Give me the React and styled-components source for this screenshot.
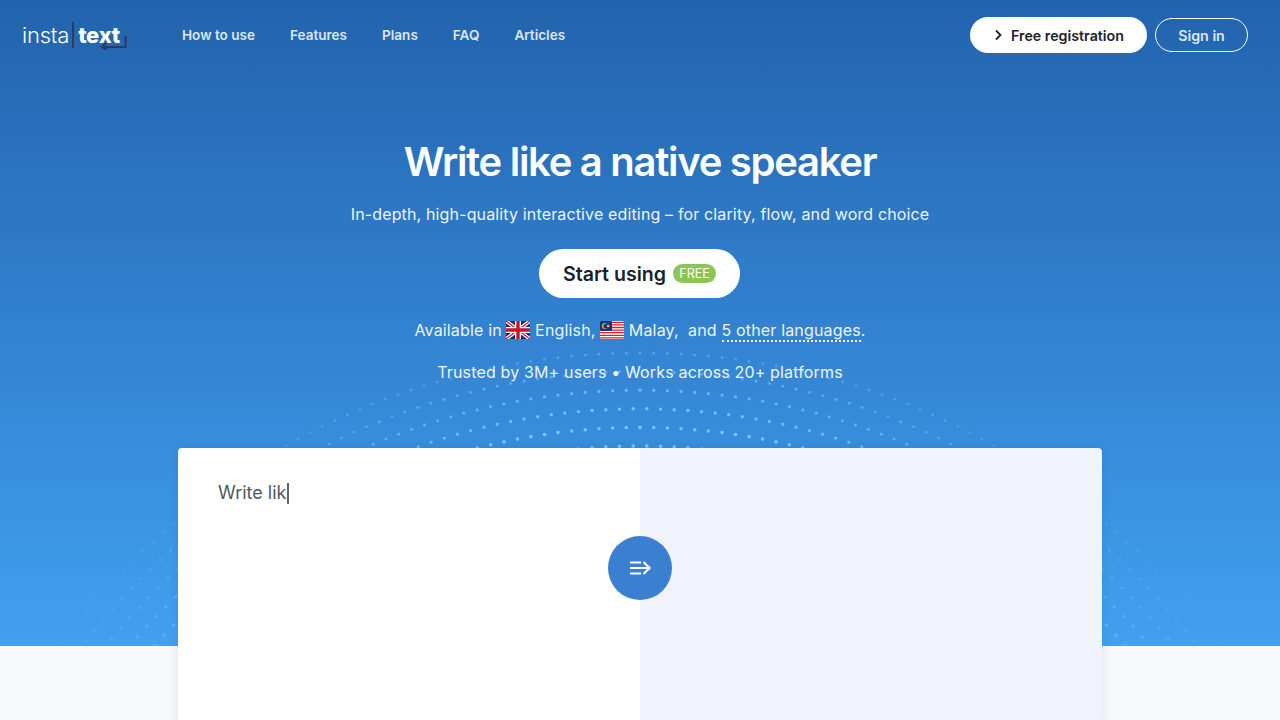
import React from 'react';
import styled, { createGlobalStyle } from 'styled-components';

const GlobalStyle = createGlobalStyle`
    html, body {
        margin: 0;
        padding: 0;
        background: #f7f8fc;
        font-family: Inter, 'Noto Sans', sans-serif;
    }
    #root {
        height: 720px;
        overflow: hidden;
    }
`;

const NAV_LINKS = ['How to use', 'Features', 'Plans', 'FAQ', 'Articles'];

// rings of dots behind the editor, same centre, staggered every other ring
const buildDots = () => {
    const dots = [];
    for (let ring = 0; ring < 15; ring++) {
        const radius = 723 - ring * 18.6;
        const step = 13.7 / radius;
        const offset = ring % 2 === 0 ? 0 : step / 2;
        const strength = Math.min(1, 0.45 + ring * 0.13);
        for (let n = -70; n <= 70; n++) {
            const angle = n * step + offset;
            const fade = Math.max(0, 1 - Math.abs(angle) / 1.2);
            if (fade <= 0) continue;
            dots.push({
                x: 640 + radius * Math.sin(angle),
                y: 1076 - radius * Math.cos(angle),
                r: 1 + strength * 0.85,
                o: strength * (0.14 + fade * 1.05),
            });
        }
    }
    return dots;
};
const DOTS = buildDots();

const UkFlag = () => (
    <FlagSvg viewBox='0 0 24 18'>
        <rect width='24' height='18' rx='1.5' fill='#1f2a6b' />
        <path d='M0 0 24 18M24 0 0 18' stroke='#fff' strokeWidth='3.6' />
        <path d='M0 0 24 18M24 0 0 18' stroke='#c8142c' strokeWidth='1.2' />
        <path d='M12 0V18M0 9H24' stroke='#fff' strokeWidth='6' />
        <path d='M12 0V18M0 9H24' stroke='#c8142c' strokeWidth='3.4' />
    </FlagSvg>
);

const MalaysiaFlag = () => (
    <FlagSvg viewBox='0 0 24 18'>
        <rect width='24' height='18' rx='1.5' fill='#fff' />
        <path
            d='M0 1.3H24M0 3.9H24M0 6.5H24M0 9.1H24M0 11.7H24M0 14.3H24M0 16.9H24'
            stroke='#d8202c'
            strokeWidth='1.3'
        />
        <rect width='12' height='10' rx='1' fill='#1d2f80' />
        <circle cx='5' cy='5' r='3' fill='#f5c518' />
        <circle cx='6' cy='5' r='2.6' fill='#1d2f80' />
        <circle cx='8.2' cy='5' r='1.3' fill='#f5c518' />
    </FlagSvg>
);

const Logo = () => (
    <LogoWrap>
        <LogoLight>insta</LogoLight>
        <LogoBar />
        <LogoBold>text</LogoBold>
        <LogoArrow viewBox='0 0 30 16' fill='none'>
            <path
                d='M27.5 2V13H4M8.5 9 4 13l4.5 3'
                stroke='#2b3a66'
                strokeWidth='2.2'
            />
        </LogoArrow>
    </LogoWrap>
);

export default function App() {
    return (
        <>
            <GlobalStyle />
            <Hero>
                <DotField viewBox='0 0 1280 646'>
                    {DOTS.map((dot, i) => (
                        <circle
                            key={i}
                            cx={dot.x}
                            cy={dot.y}
                            r={dot.r}
                            fill='#74c6f7'
                            opacity={dot.o}
                        />
                    ))}
                </DotField>
                <Nav>
                    <Logo />
                    <NavLinks>
                        {NAV_LINKS.map((link) => (
                            <NavLink key={link}>{link}</NavLink>
                        ))}
                    </NavLinks>
                    <NavActions>
                        <RegisterButton>
                            <svg width='10' height='12' viewBox='0 0 10 12' fill='none'>
                                <path
                                    d='M3 1.5 7.5 6 3 10.5'
                                    stroke='#1c2230'
                                    strokeWidth='1.8'
                                />
                            </svg>
                            Free registration
                        </RegisterButton>
                        <SignInButton>Sign in</SignInButton>
                    </NavActions>
                </Nav>
                <Intro>
                    <Title>Write like a native speaker</Title>
                    <Subtitle>
                        In-depth, high-quality interactive editing – for clarity, flow, and
                        word choice
                    </Subtitle>
                    <StartButton>
                        Start using
                        <FreeBadge>FREE</FreeBadge>
                    </StartButton>
                    <InfoLine>
                        Available in <UkFlag /> English, <MalaysiaFlag /> Malay,&nbsp; and{' '}
                        <LanguagesLink>5 other languages</LanguagesLink>.
                    </InfoLine>
                    <InfoLine>
                        Trusted by 3M+ users • Works across 20+ platforms
                    </InfoLine>
                </Intro>
                <Editor>
                    <InputPane>
                        Write lik
                        <Caret />
                    </InputPane>
                    <OutputPane />
                    <ConvertButton>
                        <svg width='24' height='20' viewBox='0 0 24 20' fill='none'>
                            <path
                                d='M2 4.5H13M2 10H20M2 15.5H13M15.5 4 21.5 10 15.5 16'
                                stroke='#fff'
                                strokeWidth='2.1'
                            />
                        </svg>
                    </ConvertButton>
                </Editor>
            </Hero>
        </>
    );
}

const Hero = styled.section`
    position: relative;
    height: 646px;
    background: linear-gradient(180deg, #2263ad 0%, #42a0f1 100%);
    color: #fff;
`;

const DotField = styled.svg`
    position: absolute;
    inset: 0;
    width: 1280px;
    height: 646px;
`;

const Nav = styled.header`
    position: relative;
    display: flex;
    align-items: center;
    height: 70px;
    padding: 0 32px 0 22px;
`;

const LogoWrap = styled.div`
    position: relative;
    display: flex;
    align-items: center;
    width: 160px;
    font-size: 22px;
    line-height: 26px;
    letter-spacing: -0.01em;
`;

const LogoLight = styled.span`
    font-weight: 300;
`;

const LogoBold = styled.span`
    font-weight: 800;
`;

const LogoBar = styled.span`
    width: 2px;
    height: 26px;
    margin: 0 4px 0 3px;
    background: #2b3a66;
`;

const LogoArrow = styled.svg`
    position: absolute;
    left: 76px;
    top: 12px;
    width: 30px;
    height: 16px;
`;

const NavLinks = styled.nav`
    display: flex;
    gap: 35px;
`;

const NavLink = styled.a`
    font-size: 13.55px;
    font-weight: 600;
    color: #dbe7f7;
`;

const NavActions = styled.div`
    display: flex;
    align-items: center;
    gap: 8px;
    margin-left: auto;
`;

const RegisterButton = styled.button`
    display: flex;
    align-items: center;
    justify-content: center;
    gap: 8px;
    width: 177px;
    height: 36px;
    padding: 0;
    border: 0;
    border-radius: 18px;
    background: #fff;
    color: #1c2230;
    font: 600 14.25px Inter, sans-serif;
`;

const SignInButton = styled.button`
    width: 93px;
    height: 34px;
    padding: 0;
    border: 1px solid #fff;
    border-radius: 17px;
    background: transparent;
    color: #dbe7f7;
    font: 600 14.25px Inter, sans-serif;
`;

const Intro = styled.div`
    position: relative;
    display: flex;
    flex-direction: column;
    align-items: center;
    padding-top: 67px;
`;

const Title = styled.h1`
    margin: 0;
    font-size: 40px;
    line-height: 50px;
    font-weight: 600;
    letter-spacing: -0.032em;
`;

const Subtitle = styled.p`
    margin: 15px 0 0;
    font-size: 16px;
    line-height: 24px;
    letter-spacing: 0.009em;
    color: #eef4fc;
`;

const StartButton = styled.button`
    display: flex;
    align-items: center;
    justify-content: center;
    gap: 7px;
    width: 201px;
    height: 49px;
    margin: 23px 1px 0 0;
    padding: 0;
    border: 0;
    border-radius: 25px;
    background: #fff;
    color: #1a1f2e;
    font: 600 19.6px Inter, sans-serif;
`;

const FreeBadge = styled.span`
    width: 43px;
    height: 19px;
    border-radius: 10px;
    background: #8bc556;
    color: #fff;
    font-size: 12.5px;
    font-weight: 400;
    line-height: 19px;
    text-align: center;
`;

const InfoLine = styled.p`
    margin: 21px 0 0;
    height: 21px;
    font-size: 16px;
    line-height: 21px;
    letter-spacing: 0.01em;
    color: #eef4fc;
    white-space: pre;

    ${StartButton} + & {
        margin-top: 22px;
    }
`;

const FlagSvg = styled.svg`
    display: inline-block;
    width: 24px;
    height: 18px;
    vertical-align: -3px;
`;

const LanguagesLink = styled.a`
    border-bottom: 2px dotted #eef4fc;
`;

const Editor = styled.div`
    position: relative;
    display: grid;
    grid-template-columns: 1fr 1fr;
    width: 924px;
    height: 272px;
    margin: 65px auto 0;
    border-radius: 4px 4px 0 0;
    box-shadow: 0 0 10px rgba(40, 60, 110, 0.12);
`;

const InputPane = styled.div`
    padding: 33px 40px;
    background: #fff;
    border-radius: 4px 0 0 0;
    color: #53575d;
    font-size: 18px;
    line-height: 24px;
`;

const Caret = styled.span`
    display: inline-block;
    width: 2px;
    height: 21px;
    margin-left: 1px;
    background: #63676d;
    vertical-align: -5px;
`;

const OutputPane = styled.div`
    background: #f0f3fb;
    border-radius: 0 4px 0 0;
`;

const ConvertButton = styled.button`
    position: absolute;
    left: 430px;
    top: 88px;
    display: flex;
    align-items: center;
    justify-content: center;
    width: 64px;
    height: 64px;
    padding: 0;
    border: 0;
    border-radius: 50%;
    background: #3a7fd0;
`;
